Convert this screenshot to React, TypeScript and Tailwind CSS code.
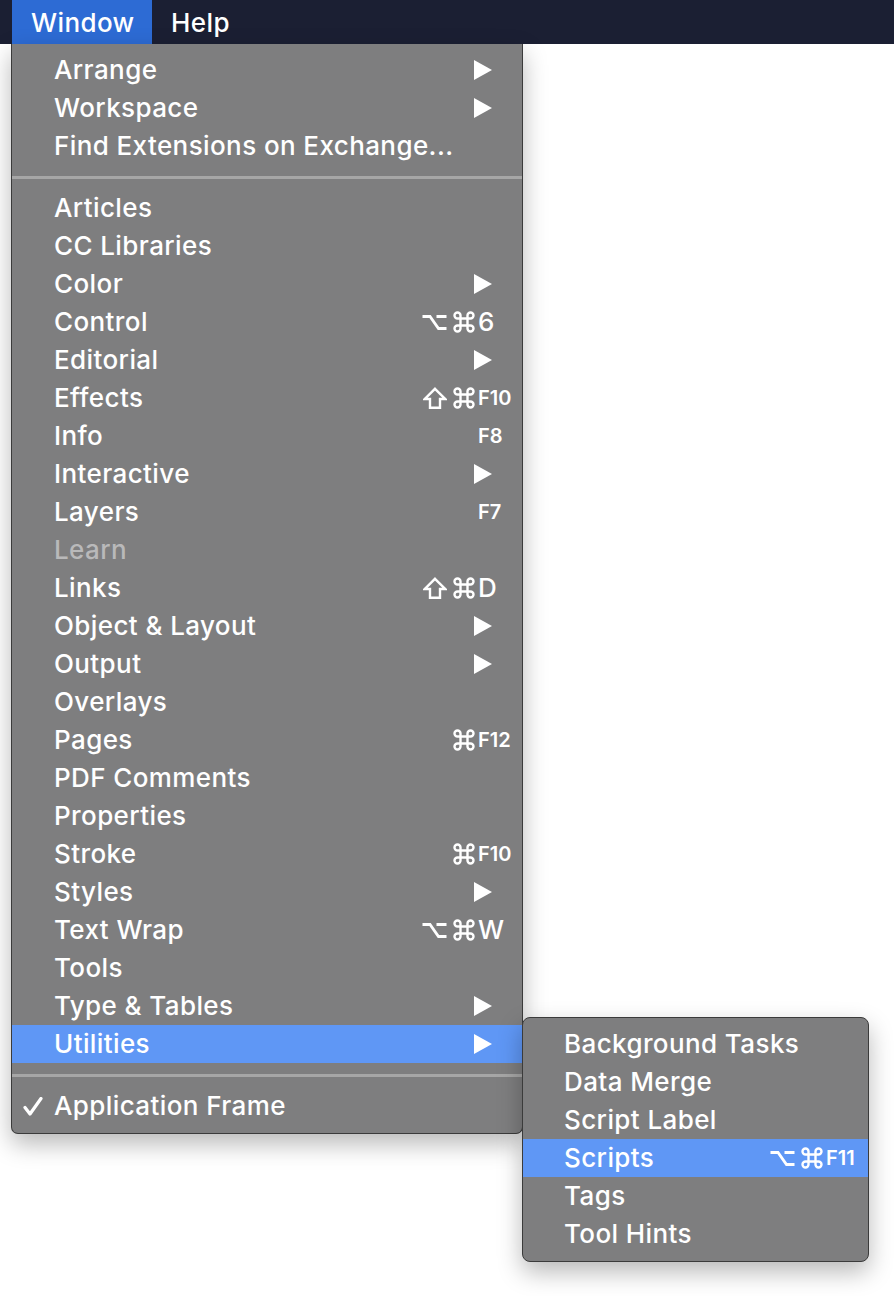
import React from "react";

type Item =
  | { type: "sep" }
  | {
      type?: "item";
      label: string;
      arrow?: boolean;
      mods?: string;
      key?: string;
      small?: boolean;
      disabled?: boolean;
      active?: boolean;
      check?: boolean;
    };

const items: Item[] = [
  { label: "Arrange", arrow: true },
  { label: "Workspace", arrow: true },
  { label: "Find Extensions on Exchange..." },
  { type: "sep" },
  { label: "Articles" },
  { label: "CC Libraries" },
  { label: "Color", arrow: true },
  { label: "Control", mods: "⌥⌘", key: "6" },
  { label: "Editorial", arrow: true },
  { label: "Effects", mods: "⇧⌘", key: "F10", small: true },
  { label: "Info", key: "F8", small: true },
  { label: "Interactive", arrow: true },
  { label: "Layers", key: "F7", small: true },
  { label: "Learn", disabled: true },
  { label: "Links", mods: "⇧⌘", key: "D" },
  { label: "Object & Layout", arrow: true },
  { label: "Output", arrow: true },
  { label: "Overlays" },
  { label: "Pages", mods: "⌘", key: "F12", small: true },
  { label: "PDF Comments" },
  { label: "Properties" },
  { label: "Stroke", mods: "⌘", key: "F10", small: true },
  { label: "Styles", arrow: true },
  { label: "Text Wrap", mods: "⌥⌘", key: "W" },
  { label: "Tools" },
  { label: "Type & Tables", arrow: true },
  { label: "Utilities", arrow: true, active: true },
  { type: "sep" },
  { label: "Application Frame", check: true },
];

const subItems = [
  { label: "Background Tasks" },
  { label: "Data Merge" },
  { label: "Script Label" },
  { label: "Scripts", active: true, mods: "⌥⌘", key: "F11" },
  { label: "Tags" },
  { label: "Tool Hints" },
];

const Arrow = () => (
  <svg width="18" height="20" viewBox="0 0 18 20" className="block">
    <polygon points="0,0 18,10 0,20" fill="#ffffff" />
  </svg>
);

const Check = () => (
  <svg width="20" height="19" viewBox="0 0 20 19" className="block">
    <path
      d="M2 10.5 L7 17 L18 1.5"
      fill="none"
      stroke="#ffffff"
      strokeWidth="3.2"
      strokeLinecap="round"
      strokeLinejoin="round"
    />
  </svg>
);

const OptionKey = () => (
  <svg width="25" height="15" viewBox="0 0 25 15" className="block">
    <path
      d="M0.5 1.5 H8 L16.5 13.5 H24.5 M14.5 1.5 H24.5"
      fill="none"
      stroke="#ffffff"
      strokeWidth="2.8"
    />
  </svg>
);

const CmdKey = () => (
  <svg width="22" height="22" viewBox="0 0 22 22" className="block">
    <path
      d="M7.5 7.5 V14.5 M14.5 7.5 V14.5 M7.5 7.5 H14.5 M7.5 14.5 H14.5 M7.5 7.5 H4.5 A3 3 0 1 1 7.5 4.5 V7.5 M14.5 7.5 V4.5 A3 3 0 1 1 17.5 7.5 H14.5 M14.5 14.5 H17.5 A3 3 0 1 1 14.5 17.5 V14.5 M7.5 14.5 V17.5 A3 3 0 1 1 4.5 14.5 H7.5"
      fill="none"
      stroke="#ffffff"
      strokeWidth="2.4"
    />
  </svg>
);

const ShiftKey = () => (
  <svg width="24" height="22" viewBox="0 0 24 22" className="block">
    <path
      d="M12 1.8 L22.2 12 H17 V20.8 H7 V12 H1.8 Z"
      fill="none"
      stroke="#ffffff"
      strokeWidth="2.4"
      strokeLinejoin="miter"
    />
  </svg>
);

const Mods = ({ mods }: { mods: string }) => (
  <span className="flex items-center gap-[6px]">
    {mods.split("").map((m, i) =>
      m === "⌥" ? (
        <OptionKey key={i} />
      ) : m === "⌘" ? (
        <CmdKey key={i} />
      ) : (
        <ShiftKey key={i} />
      )
    )}
  </span>
);

export default function App() {
  return (
    <div
      className="relative w-[894px] h-[1296px] bg-white overflow-hidden"
      style={{ fontFamily: 'Inter, "Noto Sans", sans-serif' }}
    >
      {/* Top menu bar */}
      <div className="flex h-[44px] items-stretch bg-[#1b1f33] text-white text-[26px] font-medium tracking-[0.4px]">
        <div className="ml-[12px] flex w-[140px] items-center bg-[#2d6bd4] pl-[19px]">
          Window
        </div>
        <div className="flex items-center pl-[19px]">Help</div>
      </div>

      {/* Main menu */}
      <div className="absolute left-[11px] top-[44px] w-[512px] rounded-b-[7px] border border-t-0 border-[#3b3b3b] bg-[#7e7e7f] pt-[7px] pb-[8px] shadow-[0_10px_24px_rgba(0,0,0,0.28)]">
        {items.map((it, i) => {
          if (it.type === "sep") {
            return (
              <div key={i} className="pt-[11px] pb-[10px]">
                <div className="h-[3px] bg-[#a6a6a6]" />
              </div>
            );
          }
          return (
            <div
              key={i}
              className={`flex h-[38px] items-center text-[26px] font-medium leading-none ${
                it.active ? "bg-[#5f97f5]" : ""
              } ${it.disabled ? "text-[#b9b9ba]" : "text-white"}`}
            >
              <div className="w-[42px] pl-[11px]">
                {it.check ? <Check /> : null}
              </div>
              <div className="flex-1 tracking-[0.4px]">{it.label}</div>
              {it.arrow ? (
                <div className="w-[48px]">
                  <Arrow />
                </div>
              ) : null}
              {it.key ? (
                <div className="flex items-center">
                  {it.mods ? <Mods mods={it.mods} /> : null}
                  <span
                    className={`ml-[3px] w-[44px] ${
                      it.small ? "text-[20px] font-semibold" : "text-[26px]"
                    }`}
                  >
                    {it.key}
                  </span>
                </div>
              ) : null}
            </div>
          );
        })}
      </div>

      {/* Submenu */}
      <div className="absolute left-[522px] top-[1017px] w-[347px] rounded-[8px] border border-[#3b3b3b] bg-[#7e7e7f] pt-[7px] pb-[8px] shadow-[0_10px_24px_rgba(0,0,0,0.28)]">
        {subItems.map((it, i) => (
          <div
            key={i}
            className={`flex h-[38px] items-center text-[26px] font-medium leading-none text-white ${
              it.active ? "bg-[#5f97f5]" : ""
            }`}
          >
            <div className="flex-1 pl-[41px] tracking-[0.4px]">{it.label}</div>
            {it.key ? (
              <div className="flex items-center">
                {it.mods ? <Mods mods={it.mods} /> : null}
                <span className="ml-[3px] w-[42px] text-[20px] font-semibold">
                  {it.key}
                </span>
              </div>
            ) : null}
          </div>
        ))}
      </div>
    </div>
  );
}
